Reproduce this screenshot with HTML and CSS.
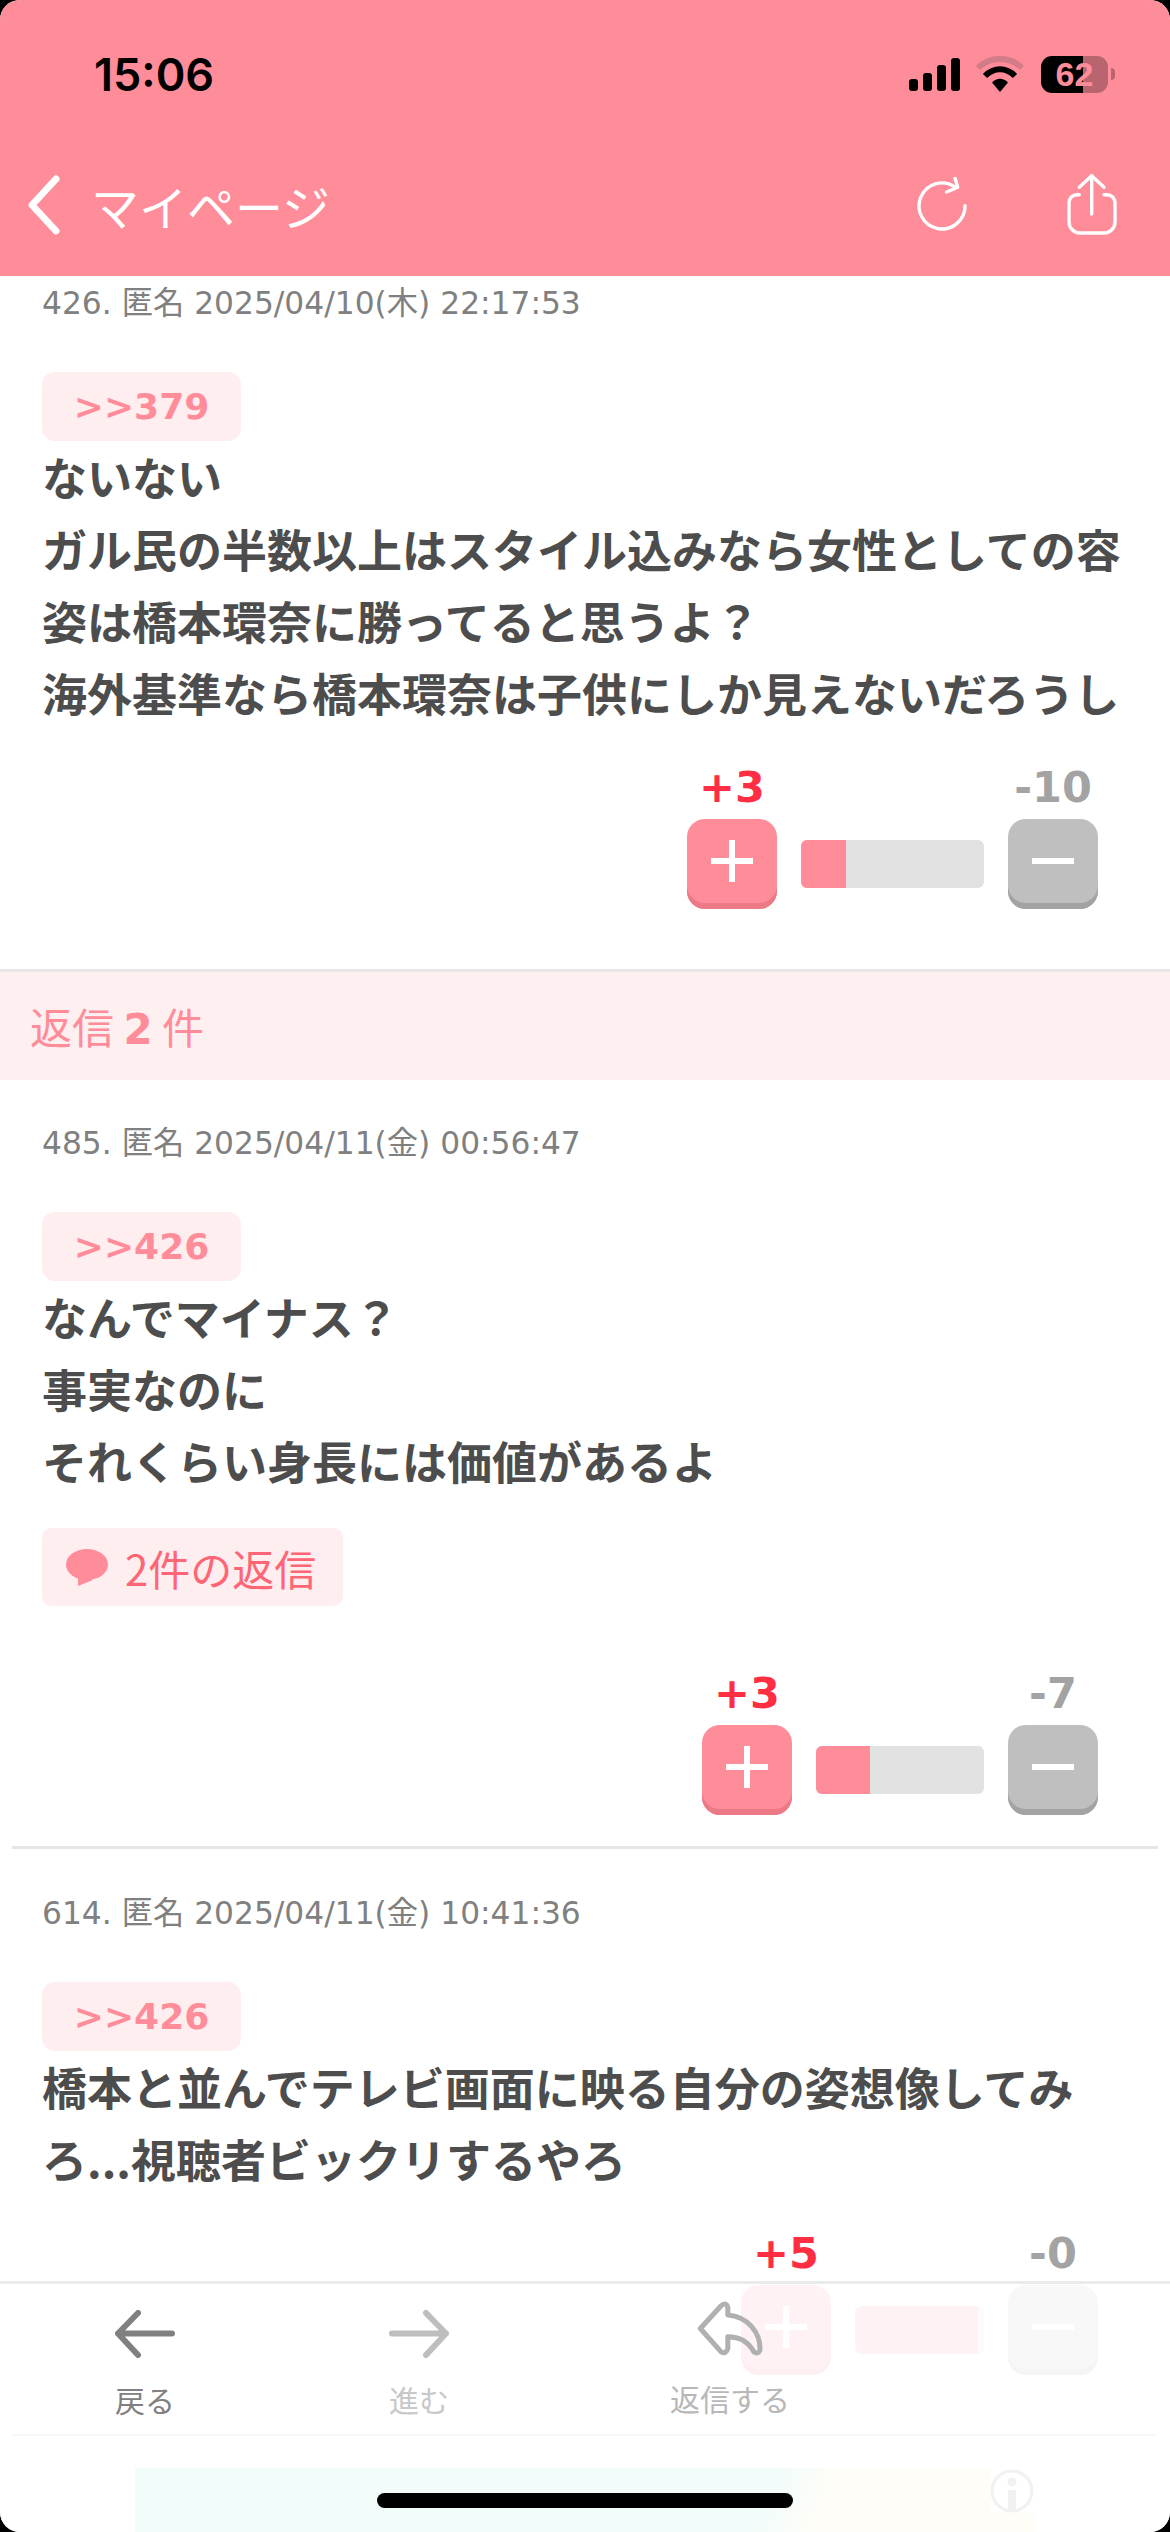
FILE: index.html
```html
<!DOCTYPE html>
<html lang="ja">
<head>
    <meta charset="UTF-8">
    <meta name="viewport" content="width=device-width, initial-scale=1.0">
    <title>マイページ</title>
    <link rel="stylesheet" href="styles.css">
</head>
<body>
    <div class="screen">
        <header class="header">
            <div class="status-bar">
                <span class="time">15:06</span>
                <div class="status-icons">
                    <div class="signal"><i class="s1"></i><i class="s2"></i><i class="s3"></i><i class="s4"></i></div>
                    <svg class="wifi" width="50" height="38" viewBox="0 0 50 38">
                        <path d="M3 13 C15 1 35 1 47 13" fill="none" stroke="#d27c87" stroke-width="6"/>
                        <path d="M10 21 C19 12 31 12 40 21" fill="none" stroke="#000" stroke-width="6"/>
                        <path d="M17 27.5 C22 22.5 28 22.5 33 27.5 L25 37 Z" fill="#000"/>
                    </svg>
                    <div class="battery"><span>62</span></div>
                    <i class="battery-nub"></i>
                </div>
            </div>
            <nav class="nav">
                <svg class="chevron" width="36" height="60" viewBox="0 0 36 60">
                    <path d="M30 4 L6 30 L30 56" fill="none" stroke="#fff" stroke-width="7" stroke-linecap="round" stroke-linejoin="round"/>
                </svg>
                <span class="nav-title">マイページ</span>
                <div class="nav-actions">
                    <svg width="56" height="56" viewBox="0 0 56 56" fill="none" stroke="#fff" stroke-width="3.4" stroke-linecap="round" stroke-linejoin="round">
                        <path d="M51 28.7 A23 23 0 1 1 41 10"/>
                        <path d="M41 1 L43.7 10.3 L32.7 15"/>
                    </svg>
                    <svg width="56" height="66" viewBox="0 0 56 66" fill="none" stroke="#fff" stroke-width="3.4" stroke-linecap="round" stroke-linejoin="round">
                        <path d="M15.3 15.3 L27.7 3.7 L40 15.3"/>
                        <path d="M27.7 3.7 V42"/>
                        <path d="M15.3 22.7 H13 a8 8 0 0 0 -8 8 V50 a11 11 0 0 0 11 11 H40 a11 11 0 0 0 11 -11 V30.7 a8 8 0 0 0 -8 -8 H40"/>
                    </svg>
                </div>
            </nav>
        </header>

        <main class="content">
            <article class="comment comment-first">
                <p class="meta">426. 匿名 2025/04/10(木) 22:17:53</p>
                <a class="anchor">&gt;&gt;379</a>
                <p class="body-text">ないない<br>ガル民の半数以上はスタイル込みなら女性としての容姿は橋本環奈に勝ってると思うよ？<br>海外基準なら橋本環奈は子供にしか見えないだろうし</p>
                <div class="votes">
                    <span class="count plus">+3</span>
                    <span class="count minus">-10</span>
                    <button class="vote-btn vote-plus">
                        <svg width="42" height="42" viewBox="0 0 42 42" fill="#fff"><rect x="18" width="6" height="42"/><rect y="18" width="42" height="6"/></svg>
                    </button>
                    <div class="bar" style="width: 183px"><div class="bar-fill" style="width: 45px"></div></div>
                    <button class="vote-btn vote-minus">
                        <svg width="42" height="42" viewBox="0 0 42 42" fill="#fff"><rect y="18" width="42" height="6"/></svg>
                    </button>
                </div>
            </article>

            <div class="reply-band">返信 <b>2</b> 件</div>

            <article class="comment comment-lined">
                <p class="meta">485. 匿名 2025/04/11(金) 00:56:47</p>
                <a class="anchor">&gt;&gt;426</a>
                <p class="body-text">なんでマイナス？<br>事実なのに<br>それくらい身長には価値があるよ</p>
                <a class="reply-link">
                    <svg width="42" height="37" viewBox="0 0 42 37" fill="#ff8c99">
                        <ellipse cx="21" cy="15.5" rx="21" ry="15.5"/>
                        <path d="M12 26 L12 37 L27 31 Z"/>
                    </svg>
                    2件の返信
                </a>
                <div class="votes">
                    <span class="count plus">+3</span>
                    <span class="count minus">-7</span>
                    <button class="vote-btn vote-plus">
                        <svg width="42" height="42" viewBox="0 0 42 42" fill="#fff"><rect x="18" width="6" height="42"/><rect y="18" width="42" height="6"/></svg>
                    </button>
                    <div class="bar" style="width: 168px"><div class="bar-fill" style="width: 54px"></div></div>
                    <button class="vote-btn vote-minus">
                        <svg width="42" height="42" viewBox="0 0 42 42" fill="#fff"><rect y="18" width="42" height="6"/></svg>
                    </button>
                </div>
            </article>

            <article class="comment">
                <p class="meta">614. 匿名 2025/04/11(金) 10:41:36</p>
                <a class="anchor">&gt;&gt;426</a>
                <p class="body-text">橋本と並んでテレビ画面に映る自分の姿想像してみろ...視聴者ビックリするやろ</p>
                <div class="votes">
                    <span class="count plus">+5</span>
                    <span class="count minus">-0</span>
                    <button class="vote-btn vote-plus">
                        <svg width="42" height="42" viewBox="0 0 42 42" fill="#fff"><rect x="18" width="6" height="42"/><rect y="18" width="42" height="6"/></svg>
                    </button>
                    <div class="bar" style="width: 129px"><div class="bar-fill" style="width: 123px"></div></div>
                    <button class="vote-btn vote-minus">
                        <svg width="42" height="42" viewBox="0 0 42 42" fill="#fff"><rect y="18" width="42" height="6"/></svg>
                    </button>
                </div>
            </article>
        </main>

        <!-- translucent toolbar, the last comment shows through it -->
        <div class="toolbar">
            <div class="tabs">
                <div class="tab tab-back">
                    <svg width="60" height="48" viewBox="0 0 60 48" fill="none" stroke="#808080" stroke-width="6" stroke-linecap="round" stroke-linejoin="round">
                        <path d="M57 23.5 H3 M23 3 L3 23.5 L23 45"/>
                    </svg>
                    <span>戻る</span>
                </div>
                <div class="tab tab-forward">
                    <svg width="60" height="48" viewBox="0 0 60 48" fill="none" stroke="#bebebe" stroke-width="6" stroke-linecap="round" stroke-linejoin="round">
                        <path d="M3 23.5 H57 M37 3 L57 23.5 L37 45"/>
                    </svg>
                    <span>進む</span>
                </div>
                <div class="tab tab-reply">
                    <svg width="67" height="57" viewBox="140 295 200 170" fill="none" stroke="#b0b0b0" stroke-width="15" stroke-linejoin="round">
                        <path d="M150 380 L212 312 Q228 300 232 318 L232 340 C290 345 330 390 328 445 Q322 458 310 450 C290 415 265 405 232 405 L232 440 Q225 458 212 450 Z"/>
                    </svg>
                    <span>返信する</span>
                </div>
            </div>
            <div class="ad">
                <div class="ad-info">
                    <svg width="44" height="44" viewBox="0 0 44 44" fill="none">
                        <circle cx="22" cy="22" r="20" stroke="#f1f1f1" stroke-width="3"/>
                        <circle cx="22" cy="13" r="4.5" fill="#f1f1f1"/>
                        <rect x="18" y="21" width="8" height="20" fill="#f1f1f1"/>
                    </svg>
                </div>
            </div>
        </div>
        <div class="home-indicator"></div>
    </div>
</body>
</html>
```

FILE: styles.css
```css
* {
    box-sizing: border-box;
}
html {
    background: #000;
}
body {
    margin: 0;
    font-family: "Noto Sans CJK JP", "Noto Sans", sans-serif;
    color: #4d4d4d;
}
p {
    margin: 0;
}
.screen {
    position: relative;
    display: flex;
    flex-direction: column;
    width: 1170px;
    height: 2532px;
    background: #fff;
    border-radius: 20px;
    overflow: hidden;
}

/* header */
.header {
    flex: none;
    height: 276px;
    background: #ff8c99;
}
.status-bar {
    display: flex;
    justify-content: space-between;
    align-items: center;
    height: 148px;
    padding: 0 55px 0 94px;
}
.time {
    font-family: Inter, "Liberation Sans", sans-serif;
    font-size: 45px;
    font-weight: 600;
    color: #000;
}
.status-icons {
    display: flex;
    align-items: center;
}
.signal {
    display: flex;
    align-items: flex-end;
    gap: 5px;
    height: 34px;
}
.signal i {
    width: 9px;
    background: #000;
    border-radius: 3px;
}
.s1 { height: 12px; }
.s2 { height: 18px; }
.s3 { height: 26px; }
.s4 { height: 33px; }
.wifi {
    margin: 0 16px 0 15px;
}
.battery {
    display: flex;
    justify-content: center;
    align-items: center;
    width: 67px;
    height: 37px;
    border-radius: 11px;
    background: linear-gradient(to right, #000 42px, #b8656f 42px);
    font-family: "Liberation Sans", sans-serif;
    font-size: 34px;
    font-weight: 700;
    color: #ff8c99;
}
.battery-nub {
    width: 4px;
    height: 12px;
    margin-left: 3px;
    background: #b8656f;
    border-radius: 0 6px 6px 0;
}
.nav {
    display: flex;
    align-items: center;
    height: 128px;
    padding: 0 50px 14px 26px;
}
.nav-title {
    margin-left: 29px;
    font-size: 48px;
    color: #fff;
}
.nav-actions {
    display: flex;
    align-items: center;
    gap: 94px;
    margin-left: auto;
}

/* comments */
.content {
    flex: 1;
    overflow: hidden;
}
.comment {
    padding: 36px 72px 31px 42px;
}
.comment-first {
    padding-top: 0;
    padding-bottom: 60px;
}
.comment-lined {
    margin-bottom: 1px;
    border-bottom: 3px solid transparent;
    background: linear-gradient(#e6e6e6, #e6e6e6) 12px 100% / 1146px 3px no-repeat;
    background-origin: border-box;
    background-clip: border-box;
}
.meta {
    height: 54px;
    font-family: "DejaVu Sans", "Noto Sans CJK JP", sans-serif;
    font-size: 31.3px;
    line-height: 54px;
    color: #808080;
}
.anchor {
    display: block;
    width: 199px;
    height: 69px;
    margin-top: 42px;
    background: #ffeef0;
    border-radius: 13px;
    font-family: "DejaVu Sans", sans-serif;
    font-size: 36px;
    font-weight: 700;
    line-height: 69px;
    text-align: center;
    color: #ff8c99;
}
.body-text {
    margin-right: -30px;
    font-size: 45px;
    font-weight: 700;
    line-height: 72px;
}
.reply-link {
    display: inline-flex;
    align-items: center;
    gap: 17px;
    height: 78px;
    margin-top: 31px;
    padding: 0 27px 0 24px;
    background: #ffeef0;
    border-radius: 9px;
    font-size: 42px;
    color: #ff6675;
}
.votes {
    display: grid;
    grid-template-columns: 90px auto 90px;
    grid-template-rows: 48px 90px;
    column-gap: 24px;
    row-gap: 9px;
    justify-content: end;
    margin-top: 33px;
}
.comment-lined .votes {
    margin-top: 62px;
}
.count {
    font-family: "DejaVu Sans", sans-serif;
    font-size: 43px;
    font-weight: 700;
    line-height: 50px;
    text-align: center;
    white-space: nowrap;
}
.count.plus {
    grid-column: 1;
    color: #ff2e43;
}
.count.minus {
    grid-column: 3;
    color: #a3a3a3;
}
.vote-btn {
    display: flex;
    justify-content: center;
    align-items: center;
    width: 90px;
    height: 90px;
    padding: 0 0 6px;
    border: none;
    border-radius: 18px;
}
.vote-plus {
    background: #ff8c99;
    box-shadow: inset 0 -6px 0 #ec7986;
}
.vote-minus {
    background: #bfbfbf;
    box-shadow: inset 0 -6px 0 #a3a3a3;
}
.bar {
    align-self: center;
    height: 48px;
    background: #e2e2e2;
    border-radius: 6px;
    overflow: hidden;
}
.bar-fill {
    height: 100%;
    background: #ff8c99;
}
.reply-band {
    height: 111px;
    padding-left: 30px;
    background: #fef0f1;
    border-top: 3px solid #e8e6e6;
    font-size: 42px;
    line-height: 108px;
    color: #ff8c99;
}
.reply-band b {
    font-family: "DejaVu Sans", sans-serif;
}

/* bottom toolbar */
.toolbar {
    position: absolute;
    left: 0;
    right: 0;
    top: 2281px;
    bottom: 0;
    background: rgba(255, 255, 255, 0.89);
    border-top: 3px solid #ebebeb;
}
.tabs {
    display: grid;
    grid-template-columns: 274px 311px 120px;
    height: 152px;
    margin: 0 13px;
    padding: 26px 0 0 72px;
    border-bottom: 2px solid #f8f8f8;
}
.tab {
    display: flex;
    flex-direction: column;
    align-items: center;
    gap: 21px;
    width: 120px;
    font-size: 30px;
    line-height: 40px;
}
.tab-back { color: #808080; }
.tab-forward { color: #c8c8c8; }
.tab-reply {
    margin-top: -10px;
    color: #b8b8b8;
}
.ad {
    position: relative;
    width: 900px;
    height: 64px;
    margin: 32px 0 0 135px;
    background: linear-gradient(115deg, #f2fcfa 70%, #fffdf8 76%);
}
.ad-info {
    position: absolute;
    top: 0;
    right: 0;
    display: flex;
    align-items: flex-start;
    width: 45px;
    height: 45px;
    background: #fff;
}
.ad-info svg {
    flex: none;
    margin: 1px 0 0;
}
.home-indicator {
    position: absolute;
    left: 377px;
    top: 2493px;
    width: 416px;
    height: 15px;
    background: #000;
    border-radius: 8px;
}
```
